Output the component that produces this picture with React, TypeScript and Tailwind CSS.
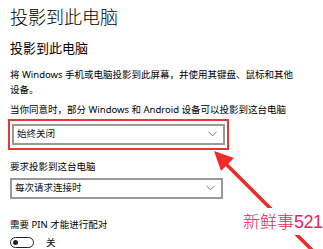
import React from 'react';

const font = { fontFamily: '"Noto Sans", "Noto Sans CJK SC", sans-serif' };

const Chevron: React.FC = () => (
  <svg className="w-[9px] h-[6px] text-[#666]" viewBox="0 0 9 6" fill="none" stroke="currentColor">
    <path d="M0.5 0.8L4.5 4.8L8.5 0.8" strokeWidth={0.9} />
  </svg>
);

const Dropdown: React.FC<{ value: string; className?: string }> = ({ value, className = '' }) => (
  <div className={`h-[21px] border-2 border-[#999] bg-white flex items-center justify-between pl-[3px] pr-[6px] text-[9.5px] text-[#111] ${className}`}>
    <span>{value}</span>
    <Chevron />
  </div>
);

export default function App() {
  return (
    <div className="relative w-[323px] h-[249px] overflow-hidden bg-white text-black" style={font}>
      <div className="px-[10px] pt-[7px]">
        <h1 className="text-[18px] leading-[20px] font-light">投影到此电脑</h1>
        <h2 className="mt-[13px] text-[13px] leading-[16px]">投影到此电脑</h2>
        <p className="mt-[11px] text-[9.5px] leading-[15px] w-[285px]">
          将 Windows 手机或电脑投影到此屏幕，并使用其键盘、鼠标和其他设备。
        </p>
        <p className="mt-[5px] text-[9.5px] leading-[15px] whitespace-nowrap">当你同意时，部分 Windows 和 Android 设备可以投影到这台电脑</p>
        <div className="mt-[1.5px] -ml-[2px] w-[221px] h-[31px] border-2 border-[#e53935] p-[2px] pt-[3px]">
          <Dropdown value="始终关闭" />
        </div>
        <p className="mt-[9.5px] text-[9.5px] leading-[15px]">要求投影到这台电脑</p>
        <Dropdown value="每次请求连接时" className="mt-[3.5px] w-[213px]" />
        <p className="mt-[18px] text-[9.5px] leading-[15px]">需要 PIN 才能进行配对</p>
        <div className="mt-[5px] flex items-center gap-[12px]">
          <div className="w-[24px] h-[11px] rounded-full border-[1.5px] border-[#222] flex items-center pl-[2px]">
            <div className="w-[5px] h-[5px] rounded-full bg-[#222]" />
          </div>
          <span className="text-[9.5px] leading-[12px]">关</span>
        </div>
      </div>

      <svg className="absolute inset-0 w-[323px] h-[249px] pointer-events-none" viewBox="0 0 323 249">
        <line x1="226" y1="164" x2="340" y2="278" stroke="#ee2a2a" strokeWidth={3.5} />
        <polygon points="214,151 234,158 221,171" fill="#ee2a2a" />
      </svg>

      <div
        className="absolute left-[242px] top-[208px] bg-white px-[1px] text-[17px] leading-[26px] text-[#e6245c] whitespace-nowrap flex items-baseline"
        style={{ fontFamily: '"Noto Sans CJK SC", "Liberation Sans", sans-serif' }}
      >
        <span className="font-light">新鲜事</span>
        <span className="text-[18px] tracking-[-0.5px]" style={{ fontFamily: '"Liberation Sans", sans-serif' }}>521</span>
      </div>
    </div>
  );
}
